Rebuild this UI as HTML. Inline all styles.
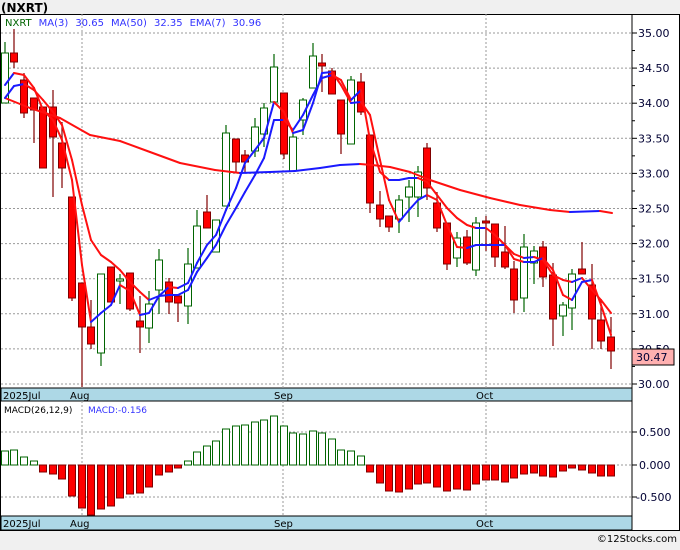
<!DOCTYPE html>
<html><head><meta charset="utf-8"><style>
body{margin:0;width:680px;height:546px;background:#f0f0f0;overflow:hidden;font-family:"DejaVu Sans",sans-serif}
</style></head><body>
<svg id="s" width="680" height="546" xmlns="http://www.w3.org/2000/svg" font-family="DejaVu Sans, sans-serif">
<rect x="0" y="0" width="680" height="546" fill="#f0f0f0"/>
<rect x="0.5" y="14.5" width="679" height="516" fill="#fff" stroke="#000"/>
<text x="1" y="12" font-size="12" font-weight="bold" fill="#000">(NXRT)</text>
<text x="5" y="26" font-size="10"><tspan fill="#006400">NXRT</tspan><tspan fill="#3333ff" dx="7">MA(3)</tspan><tspan fill="#3333ff" dx="7">30.65</tspan><tspan fill="#3333ff" dx="7">MA(50)</tspan><tspan fill="#3333ff" dx="7">32.35</tspan><tspan fill="#3333ff" dx="7">EMA(7)</tspan><tspan fill="#3333ff" dx="7">30.96</tspan></text>
<rect x="1" y="388" width="631" height="13" fill="#add8e6" stroke="#000"/>
<rect x="1" y="516" width="631" height="14" fill="#add8e6" stroke="#000"/>
<text x="3" y="399" font-size="10" fill="#000">2025Jul</text>
<text x="70" y="399" font-size="10" fill="#000">Aug</text>
<text x="274" y="399" font-size="10" fill="#000">Sep</text>
<text x="476" y="399" font-size="10" fill="#000">Oct</text>
<text x="3" y="527" font-size="10" fill="#000">2025Jul</text>
<text x="70" y="527" font-size="10" fill="#000">Aug</text>
<text x="274" y="527" font-size="10" fill="#000">Sep</text>
<text x="476" y="527" font-size="10" fill="#000">Oct</text>
<text x="4" y="413" font-size="9" fill="#000">MACD(26,12,9)</text>
<text x="88" y="413" font-size="9" fill="#3333ff">MACD:-0.156</text>
<line x1="632" y1="14" x2="632" y2="530" stroke="#000"/>
<g id="g"></g>
<rect x="632" y="349" width="42" height="16" fill="#ffb0b0" stroke="#000"/>
<text x="636" y="361" font-size="11" fill="#000033">30.47</text>
<text x="677" y="542" font-size="10" fill="#000" text-anchor="end">©12Stocks.com</text>
</svg>
<script>
var g=document.getElementById('g'),h='';
function Y(p){return 384-(p-30)*70.2}
[82,283,486].forEach(function(x){h+='<line x1="'+x+'" y1="14" x2="'+x+'" y2="388" stroke="#999" stroke-dasharray="2,2"/><line x1="'+x+'" y1="401" x2="'+x+'" y2="516" stroke="#999" stroke-dasharray="2,2"/>';});
for(var p=30;p<=35.01;p+=0.5){var y=Y(p);h+='<line x1="1" y1="'+y+'" x2="632" y2="'+y+'" stroke="#999" stroke-dasharray="2,2"/><line x1="632" y1="'+y+'" x2="637" y2="'+y+'" stroke="#000"/><text x="638" y="'+(y+4)+'" font-size="11" fill="#000033">'+p.toFixed(2)+'</text>';
 var y2=Y(p+0.25);if(p<35)h+='<line x1="632" y1="'+y2+'" x2="635" y2="'+y2+'" stroke="#000"/>';}
[[0.5,432],[0,465],[-0.5,497]].forEach(function(a){h+='<line x1="1" y1="'+a[1]+'" x2="632" y2="'+a[1]+'" stroke="#999" stroke-dasharray="2,2"/><line x1="632" y1="'+a[1]+'" x2="637" y2="'+a[1]+'" stroke="#000"/><text x="'+(a[0]<0?636:639)+'" y="'+(a[1]+4)+'" font-size="11" fill="#000033">'+(a[0]<0?'-0.500':a[0].toFixed(3))+'</text>';});
var C=[[5,53,103,42,103,1],[14,53,62,29,68,0],[24,80,113,73,118,0],[34,98,110,98,143,0],[43,107,168,107,168,0],[53,107,137,90,197,0],[62,143,168,122,188,0],[72,197,298,197,301,0],[82,283,327,283,387,0],[91,327,344,300,349,0],[101,274,353,274,366,1],[111,267,302,267,302,0],[120,279,281,274,304,1],[130,273,309,273,311,0],[140,321,327,296,353,0],[149,304,328,291,343,1],[159,260,290,249,314,1],[169,282,302,278,314,0],[178,296,303,296,322,0],[188,264,306,248,324,1],[197,226,268,210,268,1],[207,212,228,195,228,0],[216,220,252,220,252,1],[226,133,206,125,206,1],[236,139,162,139,173,0],[245,155,162,150,173,0],[255,127,151,118,157,1],[264,108,134,103,147,1],[274,67,102,54,102,1],[284,93,154,93,159,0],[293,137,171,133,171,1],[303,100,120,98,135,1],[313,56,88,43,88,1],[322,63,66,54,92,0],[332,71,94,68,94,0],[341,100,134,100,154,0],[351,80,144,76,144,1],[361,82,112,73,115,0],[370,135,203,135,213,0],[380,205,219,191,227,0],[389,216,227,216,232,0],[399,200,219,195,233,1],[409,187,197,180,222,1],[418,172,197,166,217,1],[427,148,188,143,200,0],[437,203,228,192,232,0],[447,223,264,223,270,0],[457,238,258,232,267,1],[467,237,263,230,265,0],[476,223,270,217,276,1],[486,221,223,216,251,0],[495,224,257,224,267,0],[505,252,267,226,269,0],[514,269,300,261,313,0],[524,247,298,234,312,1],[534,251,263,246,284,1],[543,247,277,241,287,0],[553,275,319,263,346,0],[563,305,316,302,336,1],[572,274,308,269,330,1],[582,269,274,242,274,0],[592,285,319,264,349,0],[601,320,341,299,349,0],[611,337,351,317,369,0]];
C.forEach(function(c){var col=c[5]?'#006400':'#800000';
 h+='<line x1="'+c[0]+'" y1="'+c[3]+'" x2="'+c[0]+'" y2="'+c[4]+'" stroke="'+col+'" stroke-width="1.2"/>';
 h+='<rect x="'+(c[0]-3.5)+'" y="'+c[1]+'" width="7" height="'+Math.max(2,c[2]-c[1])+'" fill="'+(c[5]?'#fff':'#ff0000')+'" stroke="'+col+'"/>';});
function line(P){var s='';for(var i=1;i<P.length;i++){var a=P[i-1],b=P[i];var col=b[1]>a[1]+0.3?'#ff1010':'#1a1aff';s+='<line x1="'+a[0]+'" y1="'+a[1]+'" x2="'+b[0]+'" y2="'+b[1]+'" stroke="'+col+'" stroke-width="2" stroke-linecap="round"/>';}return s;}
var MA50=[[5,98],[30,108],[60,118],[90,135],[120,141],[150,152],[180,163],[215,170],[240,173],[270,172],[295,171],[320,168],[340,165],[360,164],[372,165],[390,167],[410,172],[430,180],[460,190],[490,198],[520,205],[550,210],[570,212],[600,211],[612,213]];
var MA3=[[5,85],[14,73],[24,75],[34,88],[43,110],[53,120],[62,140],[72,180],[82,265],[91,322],[101,313],[111,305],[120,285],[130,291],[140,315],[149,313],[159,296],[169,287],[178,288],[188,283],[197,263],[207,245],[216,235],[226,210],[236,188],[245,163],[255,150],[264,138],[274,102],[284,112],[293,133],[303,130],[313,103],[322,73],[332,72],[341,85],[351,103],[361,102],[370,115],[380,160],[389,200],[399,222],[409,210],[418,200],[427,195],[437,200],[447,225],[457,247],[467,248],[476,245],[486,245],[495,245],[505,245],[514,259],[524,262],[534,262],[543,258],[553,270],[563,295],[572,300],[582,282],[592,280],[601,305],[611,335]];
var EMA=[[5,98],[14,86],[24,84],[34,90],[43,100],[53,112],[62,125],[72,160],[82,205],[91,240],[101,255],[111,262],[120,270],[130,282],[140,292],[149,300],[159,296],[169,295],[178,295],[188,290],[197,272],[207,258],[216,245],[226,225],[236,208],[245,192],[255,175],[264,158],[274,120],[284,120],[293,130],[303,115],[313,95],[322,78],[332,75],[341,80],[351,100],[361,90],[370,140],[380,172],[389,180],[399,180],[409,178],[418,178],[427,182],[437,195],[447,208],[457,218],[467,225],[476,228],[486,228],[495,235],[505,245],[514,254],[524,258],[534,257],[543,260],[553,275],[563,280],[572,282],[582,278],[592,290],[601,300],[611,313]];
h+=line(MA50)+line(EMA)+line(MA3);
var M=[451,450,457,461,472,474,479,496,508,515,509,506,498,494,493,487,475,472,468,461,452,446,441,429,426,425,422,420,416,426,433,434,431,433,439,450,451,456,472,483,491,492,489,484,483,487,491,489,490,484,480,480,482,478,474,473,476,477,471,468,470,473,476,476];
M.forEach(function(v,i){var x=C[i][0];var up=v<465;var t=Math.min(v,465),b=Math.max(v,465);
 h+='<rect x="'+(x-3.5)+'" y="'+t+'" width="7" height="'+(b-t)+'" fill="'+(up?'#fff':'#ff0000')+'" stroke="'+(up?'#006400':'#800000')+'"/>';});
g.innerHTML=h;
</script>
</body></html>
